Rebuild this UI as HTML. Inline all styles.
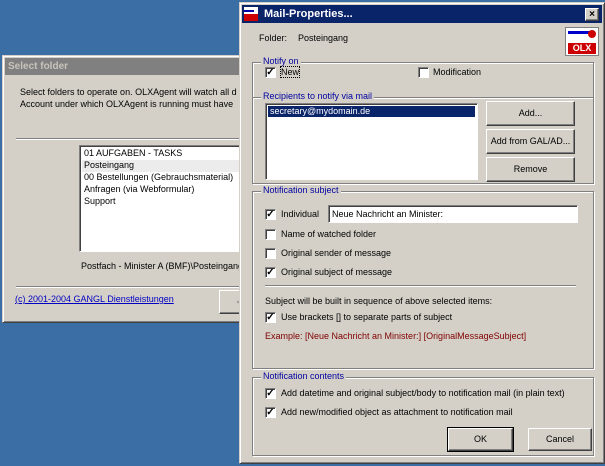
<!DOCTYPE html><html><head><style>
*{margin:0;padding:0;box-sizing:border-box}
body{width:605px;height:466px;background:#3a6ea5;position:relative;overflow:hidden;font-family:"Liberation Sans",sans-serif;font-size:9px;color:#000}
.a{position:absolute;white-space:nowrap}
.win{position:absolute;background:#d4d0c8;border:1px solid;border-color:#d4d0c8 #404040 #404040 #d4d0c8;box-shadow:inset 1px 1px #fff,inset -1px -1px #808080}
.grp{position:absolute;border:1px solid #808080;box-shadow:1px 1px #fff,inset 1px 1px #fff}
.lg{position:absolute;top:-7px;left:8px;background:#d4d0c8;color:#0000a0;padding:0 2px;white-space:nowrap}
.cb{position:absolute;width:11px;height:11px;background:#fff;border:1px solid;border-color:#808080 #fff #fff #808080;box-shadow:inset 1px 1px #404040;font-size:10px;line-height:9px;text-align:center;font-weight:bold}
.btn{position:absolute;background:#d4d0c8;border:1px solid;border-color:#fff #404040 #404040 #fff;box-shadow:inset -1px -1px #808080;text-align:center;white-space:nowrap}
.sunk{position:absolute;background:#fff;border:1px solid;border-color:#808080 #fff #fff #808080;box-shadow:inset 1px 1px #404040;white-space:nowrap;overflow:hidden}
</style></head><body>
<div class="win" style="left:2px;top:55px;width:245px;height:268px">
<div class="a" style="left:2px;top:2px;width:240px;height:17px;background:#808080;color:#c8c4bc;font-weight:bold;font-size:10px;line-height:17px;padding-left:3px">Select folder</div>
<div class="a" style="left:17px;top:31px">Select folders to operate on. OLXAgent will watch all d</div>
<div class="a" style="left:17px;top:43px">Account under which OLXAgent is running must have</div>
<div class="a" style="left:13px;top:82px;width:240px;height:2px;border-top:1px solid #808080;border-bottom:1px solid #fff"></div>
<div class="sunk" style="left:76px;top:89px;width:170px;height:107px">
<div class="a" style="left:4px;top:2px">01 AUFGABEN - TASKS</div>
<div class="a" style="left:2px;top:14px;width:170px;height:12px;background:#ececec;padding-left:2px">Posteingang</div>
<div class="a" style="left:4px;top:26px">00 Bestellungen (Gebrauchsmaterial)</div>
<div class="a" style="left:4px;top:38px">Anfragen (via Webformular)</div>
<div class="a" style="left:4px;top:50px">Support</div>
</div>
<div class="a" style="left:78px;top:205px">Postfach - Minister A (BMF)\Posteingang</div>
<div class="a" style="left:13px;top:230px;width:240px;height:2px;border-top:1px solid #808080;border-bottom:1px solid #fff"></div>
<div class="a" style="left:12px;top:238px;color:#0000c0;text-decoration:underline">(c) 2001-2004 GANGL Dienstleistungen</div>
<div class="btn" style="left:216px;top:234px;width:40px;height:24px;color:#808080;line-height:22px">&lt;</div>
</div>
<div class="win" style="left:239px;top:2px;width:366px;height:462px">
<div class="a" style="left:2px;top:2px;width:360px;height:18px;background:#0a246a;color:#fff;font-weight:bold;font-size:11px;line-height:18px;padding-left:22px">Mail-Properties...</div>
<div class="a" style="left:4px;top:4px;width:14px;height:14px;background:#fff"><div class="a" style="left:0;top:7px;width:14px;height:7px;background:#c00"></div><div class="a" style="left:0;top:3px;width:10px;height:2px;background:#00a"></div></div>
<div class="btn" style="left:345px;top:5px;width:14px;height:13px;font-size:10px;line-height:11px;font-weight:bold">×</div>
<div class="a" style="left:19px;top:30px">Folder:</div>
<div class="a" style="left:58px;top:30px">Posteingang</div>
<div class="a" style="left:325px;top:24px;width:34px;height:29px;background:#fff;border:1px solid #808080"><div class="a" style="left:2px;top:3px;width:22px;height:3px;background:#00c"></div><div class="a" style="left:22px;top:2px;width:8px;height:8px;border-radius:50%;background:#c00"></div><div class="a" style="left:2px;top:15px;width:28px;height:11px;background:#c00;color:#fff;font-weight:bold;font-size:9px;line-height:11px;text-align:center">OLX</div></div>
<div class="grp" style="left:12px;top:59px;width:342px;height:36px"><span class="lg">Notify on</span></div>
<div class="cb" style="left:25px;top:64px">✓</div><div class="a" style="left:41px;top:64px;outline:1px dotted #000">New</div>
<div class="cb" style="left:178px;top:64px"></div><div class="a" style="left:193px;top:64px">Modification</div>
<div class="grp" style="left:12px;top:94px;width:342px;height:87px"><span class="lg">Recipients to notify via mail</span></div>
<div class="sunk" style="left:25px;top:100px;width:213px;height:77px"><div class="a" style="left:2px;top:2px;width:207px;height:11px;background:#0a246a;color:#fff;padding-left:2px;line-height:11px">secretary@mydomain.de</div></div>
<div class="btn" style="left:246px;top:98px;width:89px;height:25px;line-height:23px">Add...</div>
<div class="btn" style="left:246px;top:126px;width:89px;height:25px;line-height:23px">Add from GAL/AD...</div>
<div class="btn" style="left:246px;top:154px;width:89px;height:25px;line-height:23px">Remove</div>
<div class="grp" style="left:12px;top:188px;width:342px;height:178px"><span class="lg">Notification subject</span></div>
<div class="cb" style="left:25px;top:206px">✓</div><div class="a" style="left:41px;top:206px">Individual</div>
<div class="sunk" style="left:88px;top:202px;width:250px;height:18px;padding:3px 3px">Neue Nachricht an Minister:</div>
<div class="cb" style="left:25px;top:226px"></div><div class="a" style="left:41px;top:226px">Name of watched folder</div>
<div class="cb" style="left:25px;top:245px"></div><div class="a" style="left:41px;top:245px">Original sender of message</div>
<div class="cb" style="left:25px;top:264px">✓</div><div class="a" style="left:41px;top:264px">Original subject of message</div>
<div class="a" style="left:25px;top:282px;width:311px;height:2px;border-top:1px solid #808080;border-bottom:1px solid #fff"></div>
<div class="a" style="left:25px;top:293px">Subject will be built in sequence of above selected items:</div>
<div class="cb" style="left:25px;top:309px">✓</div><div class="a" style="left:41px;top:309px">Use brackets [] to separate parts of subject</div>
<div class="a" style="left:25px;top:328px;color:#800000">Example: [Neue Nachricht an Minister:] [OriginalMessageSubject]</div>
<div class="grp" style="left:12px;top:374px;width:342px;height:79px"><span class="lg">Notification contents</span></div>
<div class="cb" style="left:25px;top:385px">✓</div><div class="a" style="left:41px;top:385px">Add datetime and original subject/body to notification mail (in plain text)</div>
<div class="cb" style="left:25px;top:404px">✓</div><div class="a" style="left:41px;top:404px">Add new/modified object as attachment to notification mail</div>
<div class="btn" style="left:208px;top:425px;width:65px;height:23px;line-height:21px;outline:1px solid #000">OK</div>
<div class="btn" style="left:288px;top:425px;width:64px;height:23px;line-height:21px">Cancel</div>
</div>
</body></html>
